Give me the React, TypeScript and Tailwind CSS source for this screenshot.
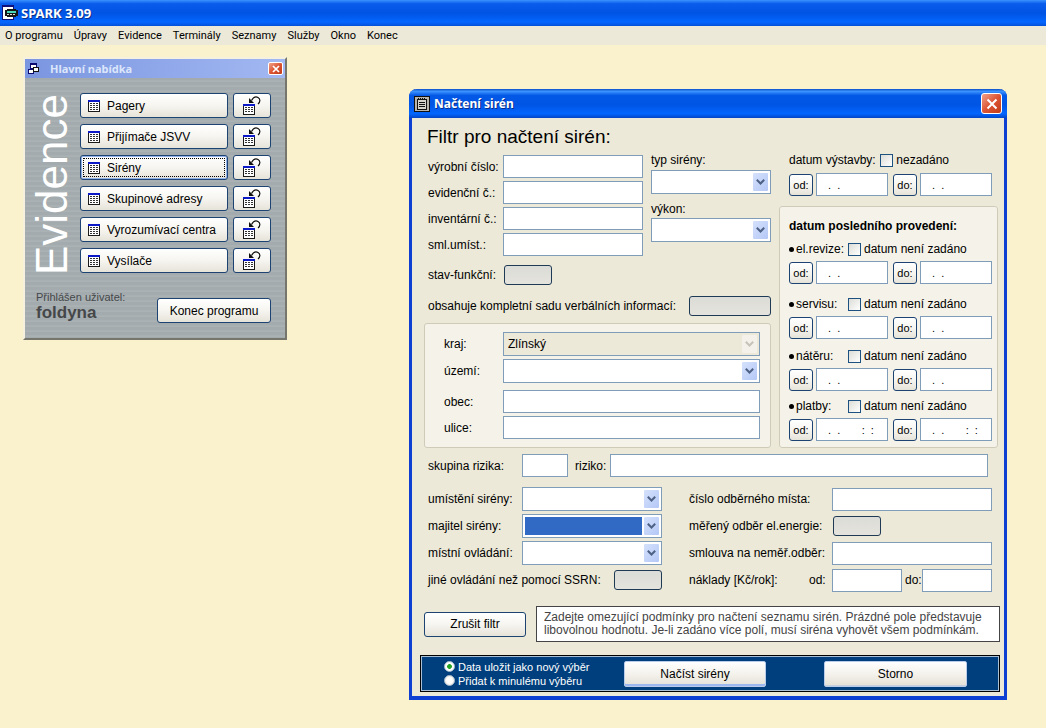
import React from 'react';
import clsx from 'clsx';

const menuItems = ['O programu', 'Úpravy', 'Evidence', 'Terminály', 'Seznamy', 'Služby', 'Okno', 'Konec'];

const mainButtons = ['Pagery', 'Přijímače JSVV', 'Sirény', 'Skupinové adresy', 'Vyrozumívací centra', 'Vysílače'];

const dateGroups = [
    { id: 'revize', label: 'el.revize:', value: ' .  .', spacing: 'mt-[7px]' },
    { id: 'servis', label: 'servisu:', value: ' .  .', spacing: 'mt-3' },
    { id: 'nater', label: 'nátěru:', value: ' .  .', spacing: 'mt-[9px]' },
    { id: 'platby', label: 'platby:', value: ' .  .       :  :', spacing: 'mt-[7px]' },
];

const buttonBase = 'rounded-[3px] border border-[#1c4372] bg-gradient-to-b from-white via-[#f6f5f0] to-[#e6e3d9]';

const TableIcon = () => (
    <svg width="12" height="12" viewBox="0 0 12 12" shapeRendering="crispEdges" className="shrink-0">
        <rect width="12" height="12" fill="#1a1a1a" />
        <rect width="12" height="2" fill="#0a18c8" />
        <rect x="1" y="2" width="10" height="9" fill="#fff" />
        <path d="M2 3.5h2M5 3.5h2M8 3.5h2M2 5.5h2M5 5.5h2M8 5.5h2M2 7.5h2M5 7.5h2M8 7.5h2M2 9.5h2M5 9.5h2M8 9.5h2" stroke="#333" />
    </svg>
);

const ReturnIcon = () => (
    <svg width="18" height="19" viewBox="0 0 18 19">
        <g shapeRendering="crispEdges">
            <rect y="8" width="12" height="11" fill="#1a1a1a" />
            <rect y="8" width="12" height="2" fill="#0a18c8" />
            <rect x="1" y="10" width="10" height="8" fill="#fff" />
            <path d="M2 11.5h2M5 11.5h2M8 11.5h2M2 13.5h2M5 13.5h2M8 13.5h2M2 15.5h2M5 15.5h2M8 15.5h2" stroke="#333" />
        </g>
        <path d="M8.500 4.500C10.500 1 13 .5 15 1.500C17.500 3 17.500 6 15 8" fill="none" stroke="#111" strokeWidth="1.200" />
        <path d="M6 2v5h5z" fill="#111" />
    </svg>
);

const AppIcon = () => (
    <svg width="16" height="16" viewBox="0 0 16 16" shapeRendering="crispEdges">
        <rect width="12" height="15" fill="#10107a" />
        <rect x="1" y="2" width="10" height="12" fill="#fff" />
        <path d="M5 4h9v1h2v6h-2v1H5v-1H3V5h2z" fill="#151515" />
        <rect x="5" y="6" width="9" height="2" fill="#46d8b8" />
        <path d="M5 9.500h2M8 9.500h2M11 9.500h2" stroke="#ddd" />
    </svg>
);

const WindowsIcon = () => (
    <svg width="12" height="12" viewBox="0 0 12 12" shapeRendering="crispEdges">
        <rect x="2.500" y="1.500" width="6" height="4" fill="#fff" stroke="#0a0a70" />
        <path d="M2 1h7" stroke="#0a0a70" strokeWidth="2" />
        <rect x=".5" y="6.500" width="5" height="4" fill="#fff" stroke="#0a0a70" />
        <rect x="5.500" y="4.500" width="5" height="4" fill="#fff" stroke="#111" />
    </svg>
);

const NotepadIcon = () => (
    <svg width="16" height="16" viewBox="0 0 16 16" shapeRendering="crispEdges">
        <rect width="16" height="16" fill="#111" />
        <rect x="1" y="1" width="14" height="14" fill="#b9b5ac" />
        <rect x="3.500" y="3.500" width="9" height="10" fill="#d6d3ca" stroke="#111" />
        <path d="M4.500 2v2M6.500 2v2M8.500 2v2M10.500 2v2M5 6.500h6M5 8.500h6M5 10.500h6" stroke="#111" />
    </svg>
);

const CloseButton = ({ small }: { small?: boolean }) => (
    <button
        type="button"
        aria-label="Zavřít"
        className={clsx(
            'flex items-center justify-center border border-white bg-gradient-to-br from-[#f0a088] via-[#dc5433] to-[#c23c18]',
            small ? 'h-[13px] w-[15px] rounded-[2px]' : 'h-[21px] w-[21px] rounded-[3px]'
        )}
    >
        <svg viewBox="0 0 12 12" className={small ? 'h-2 w-2' : 'h-3 w-3'}>
            <path d="M1.500 1.500l9 9M10.500 1.500l-9 9" stroke="#fff" strokeWidth={small ? 2.6 : 2} />
        </svg>
    </button>
);

const TextField = ({ id, className, value }: { id: string; className?: string; value?: string }) => (
    <input
        id={id}
        type="text"
        defaultValue={value}
        className={clsx('h-[23px] min-w-0 border border-[#7f9db9] bg-white px-2', className)}
    />
);

type SelectProps = {
    id: string;
    className?: string;
    value?: string;
    disabled?: boolean;
    focused?: boolean;
};

const SelectField = ({ id, className, value = '', disabled, focused }: SelectProps) => (
    <div className={clsx('relative h-6 border border-[#7f9db9] p-0.5', disabled ? 'bg-[#ece9d8]' : 'bg-white', className)}>
        <select
            id={id}
            disabled={disabled}
            defaultValue={value}
            className={clsx('block h-full appearance-none pl-0.5 text-black opacity-100 outline-none', focused ? 'w-[calc(100%-17px)] bg-[#316ac5]' : 'w-full')}
        >
            <option value={value}>{value}</option>
        </select>
        <span
            className={clsx(
                'pointer-events-none absolute top-0.5 right-0.5 bottom-0.5 flex w-[15px] items-center justify-center rounded-[1px]',
                disabled ? 'bg-[#f3f1ea]' : 'bg-gradient-to-br from-[#d5e1fc] to-[#b4c8f6]'
            )}
        >
            <svg width="9" height="6" viewBox="0 0 9 6">
                <path d="M.8 .8L4.500 4.500L8.200 .8" fill="none" stroke={disabled ? '#c6c3b8' : '#4d6185'} strokeWidth="2" />
            </svg>
        </span>
    </div>
);

const StateButton = ({ id, className }: { id: string; className?: string }) => (
    <button
        id={id}
        type="button"
        className={clsx('h-5 rounded-[3px] border border-[#1f3a55] bg-gradient-to-b from-[#dcdcd8] to-[#e4e3dc]', className)}
    />
);

const CheckBox = ({ id }: { id: string }) => (
    <input id={id} type="checkbox" className="h-[13px] w-[13px] appearance-none border border-[#1c5180] bg-gradient-to-br from-[#dcdcd7] to-white" />
);

const DateRange = ({ id, value }: { id: string; value: string }) => (
    <div className="flex items-center text-[11px]">
        <button type="button" className={clsx(buttonBase, 'h-[22px] w-6')}>od:</button>
        <input aria-label="od" id={`${id}-od`} type="text" defaultValue={value} className="ml-[3px] h-[23px] w-[72px] border border-[#7f9db9] bg-white pl-2" />
        <button type="button" className={clsx(buttonBase, 'ml-[5px] h-[22px] w-6')}>do:</button>
        <input aria-label="do" id={`${id}-do`} type="text" defaultValue={value} className="ml-[3px] h-[23px] w-[72px] border border-[#7f9db9] bg-white pl-2" />
    </div>
);

const MainMenu = () => (
    <section className="mt-3 w-[264px] shrink-0 border-2 border-t-[#f5f1de] border-l-[#f5f1de] border-r-[#77766c] border-b-[#77766c] bg-[#a5adb0]">
        <header className="flex h-[19px] items-center bg-gradient-to-r from-[#7b96e0] to-[#a2b8f2] pr-0.5 pl-[3px]">
            <WindowsIcon />
            <h2 className="ml-2.5 flex-1 font-['Noto_Sans',sans-serif] text-[11px] font-bold text-[#dce6fb]">Hlavní nabídka</h2>
            <CloseButton small />
        </header>
        <div className="bg-[repeating-linear-gradient(180deg,#a3abae_0px,#a3abae_2px,#adb5b7_3px,#9fa7aa_5px)] pt-[15px] pr-[14px] pb-[15px] pl-[9px]">
            <div className="flex">
                <div className="w-[46px] shrink-0">
                    <span className="block h-[182px] w-9 rotate-180 text-[44px] leading-[36px] text-white [writing-mode:vertical-rl]">Evidence</span>
                </div>
                <ul className="flex flex-1 flex-col gap-1.5">
                    {mainButtons.map((label) => (
                        <li key={label} className="flex gap-[5px]">
                            <button
                                type="button"
                                className={clsx(buttonBase, 'relative flex h-[25px] flex-1 items-center gap-[7px] pl-[7px]', label === 'Sirény' && 'ring-1 ring-[#8fb0ea] ring-inset')}
                            >
                                <TableIcon />
                                {label}
                                {label === 'Sirény' && <span className="absolute inset-0.5 border border-dotted border-black" />}
                            </button>
                            <button type="button" aria-label={`${label} - poslední výběr`} className={clsx(buttonBase, 'flex h-[25px] w-[38px] items-center justify-center')}>
                                <ReturnIcon />
                            </button>
                        </li>
                    ))}
                </ul>
            </div>
            <div className="mt-4 flex items-end justify-between pl-0.5">
                <div className="text-[#454749]">
                    <p className="text-[11px] leading-3">Přihlášen uživatel:</p>
                    <p className="text-[17px] leading-5 font-bold">foldyna</p>
                </div>
                <button type="button" className={clsx(buttonBase, 'h-[25px] w-[114px]')}>Konec programu</button>
            </div>
        </div>
    </section>
);

const BasicFilter = () => (
    <div className="flex-1">
        <h3 className="ml-[3px] h-[26px] text-[19px] leading-[22px]">Filtr pro načtení sirén:</h3>
        <div className="flex gap-2">
            <div className="ml-1 grid flex-1 grid-cols-[75px_1fr] items-center gap-y-[3px] pt-[3px]">
                <label htmlFor="vyrobni">výrobní číslo:</label>
                <TextField id="vyrobni" />
                <label htmlFor="evidencni">evidenční č.:</label>
                <TextField id="evidencni" />
                <label htmlFor="inventarni">inventární č.:</label>
                <TextField id="inventarni" />
                <label htmlFor="sml">sml.umíst.:</label>
                <TextField id="sml" />
            </div>
            <div className="flex w-[120px] flex-col">
                <label htmlFor="typ" className="mb-0.5">typ sirény:</label>
                <SelectField id="typ" />
                <label htmlFor="vykon" className="mt-[7px] mb-px">výkon:</label>
                <SelectField id="vykon" />
            </div>
        </div>
        <div className="mt-[9px] ml-1 flex items-center">
            <label htmlFor="stav" className="w-[76px]">stav-funkční:</label>
            <StateButton id="stav" className="w-12" />
        </div>
        <div className="mt-[11px] ml-1 flex items-center justify-between">
            <label htmlFor="verbalni">obsahuje kompletní sadu verbálních informací:</label>
            <StateButton id="verbalni" className="w-[82px]" />
        </div>
        <div className="mt-[7px] grid grid-cols-[59px_1fr] items-center gap-y-[3px] rounded-[3px] border border-[#cfcbb8] bg-[#f5f3e9] py-2 pr-[10px] pl-[19px]">
            <label htmlFor="kraj">kraj:</label>
            <SelectField id="kraj" value="Zlínský" disabled />
            <label htmlFor="uzemi">území:</label>
            <SelectField id="uzemi" />
            <label htmlFor="obec" className="mt-1">obec:</label>
            <TextField id="obec" className="mt-1" />
            <label htmlFor="ulice">ulice:</label>
            <TextField id="ulice" />
        </div>
    </div>
);

const DateFilter = () => (
    <div className="w-[219px] pt-[26px]">
        <div className="mb-[5px] flex items-center pl-2.5">
            <span>datum výstavby:</span>
            <span className="ml-auto flex items-center gap-[3px] pr-[49px]">
                <CheckBox id="nezadano" />
                <label htmlFor="nezadano">nezadáno</label>
            </span>
        </div>
        <div className="pl-2.5">
            <DateRange id="vystavba" value=" .  ." />
        </div>
        <fieldset className="mt-[10px] rounded-[3px] border border-[#cfcbb8] bg-[#f5f3e9] pt-[11px] pb-1.5 pl-[9px]">
            <h4 className="font-bold">datum posledního provedení:</h4>
            {dateGroups.map((group) => (
                <div key={group.id} className={group.spacing}>
                    <div className="mb-1 flex items-center">
                        <span className="h-[5px] w-[5px] rounded-full bg-black" />
                        <span className="ml-0.5 w-[52px]">{group.label}</span>
                        <CheckBox id={group.id} />
                        <label htmlFor={group.id} className="ml-[3px]">datum není zadáno</label>
                    </div>
                    <DateRange id={group.id} value={group.value} />
                </div>
            ))}
        </fieldset>
    </div>
);

const PlacementFilter = () => (
    <div className="mt-2.5 flex justify-between pr-3 pl-4">
        <div className="flex w-[234px] flex-col gap-[3px]">
            <div className="flex items-center">
                <label htmlFor="umisteni" className="w-[94px]">umístění sirény:</label>
                <SelectField id="umisteni" className="flex-1" />
            </div>
            <div className="flex items-center">
                <label htmlFor="majitel" className="w-[94px]">majitel sirény:</label>
                <SelectField id="majitel" className="flex-1" focused />
            </div>
            <div className="flex items-center">
                <label htmlFor="mistni" className="w-[94px]">místní ovládání:</label>
                <SelectField id="mistni" className="flex-1" />
            </div>
            <div className="flex h-6 items-center justify-between">
                <label htmlFor="jine">jiné ovládání než pomocí SSRN:</label>
                <StateButton id="jine" className="w-12" />
            </div>
        </div>
        <div className="flex w-[303px] flex-col gap-[3px]">
            <div className="flex h-6 items-center">
                <label htmlFor="odberne" className="w-[143px]">číslo odběrného místa:</label>
                <TextField id="odberne" className="flex-1" />
            </div>
            <div className="flex h-6 items-center">
                <label htmlFor="mereny" className="w-[144px]">měřený odběr el.energie:</label>
                <StateButton id="mereny" className="w-12" />
            </div>
            <div className="flex h-6 items-center">
                <label htmlFor="smlouva" className="w-[143px]">smlouva na neměř.odběr:</label>
                <TextField id="smlouva" className="flex-1" />
            </div>
            <div className="flex h-6 items-center">
                <span className="w-[120px]">náklady [Kč/rok]:</span>
                <label htmlFor="naklady-od" className="w-[23px]">od:</label>
                <TextField id="naklady-od" className="flex-1" />
                <label htmlFor="naklady-do" className="w-5 pl-[3px]">do:</label>
                <TextField id="naklady-do" className="flex-1" />
            </div>
        </div>
    </div>
);

const radioClass = 'h-[11px] w-[11px] appearance-none rounded-full border border-[#9db4c8] bg-white bg-[radial-gradient(circle,#fff_40%,#dcdcd7)] checked:bg-[radial-gradient(circle,#22a322_32%,#fff_42%)]';
const submitClass = 'h-[26px] rounded-[2px] border border-[#b9cdea] bg-gradient-to-b from-white via-[#f4f2ec] to-[#e4e1d6]';

const SirenDialog = () => (
    <section className="mt-[44px] w-[598px] shrink-0 rounded-t-lg border-x-[3px] border-b-4 border-[#0c3fd2] bg-[#ece9d8]">
        <header className="-mx-[3px] flex h-[29px] items-center rounded-t-lg bg-[linear-gradient(180deg,#0a4cc8_0%,#3d95ff_8%,#0458e6_22%,#0055e5_55%,#0366ff_85%,#0345c8_100%)] pr-[5px] pl-[5px]">
            <NotepadIcon />
            <h2 className="ml-1 flex-1 font-['Noto_Sans',sans-serif] text-[12px] font-bold text-white [text-shadow:1px_1px_#0a2f8a]">Načtení sirén</h2>
            <CloseButton />
        </header>
        <div className="pt-2 pb-1">
            <div className="flex gap-2 pr-1.5 pl-3">
                <BasicFilter />
                <DateFilter />
            </div>
            <div className="mt-1.5 flex items-center pr-4 pl-4">
                <label htmlFor="skupina" className="w-[94px]">skupina rizika:</label>
                <TextField id="skupina" className="w-[46px]" />
                <label htmlFor="riziko" className="w-[42px] pl-[7px]">riziko:</label>
                <TextField id="riziko" className="flex-1" />
            </div>
            <PlacementFilter />
            <div className="mt-3.5 flex items-center gap-2.5 pr-1 pl-3">
                <button type="button" className={clsx(buttonBase, 'h-[25px] w-[102px] shrink-0')}>Zrušit filtr</button>
                <p className="flex-1 border border-[#444] bg-white px-[7px] pt-1 pb-1 leading-[13px] whitespace-nowrap text-[#444]">
                    Zadejte omezující podmínky pro načtení seznamu sirén. Prázdné pole představuje
                    <br />
                    libovolnou hodnotu. Je-li zadáno více polí, musí siréna vyhovět všem podmínkám.
                </p>
            </div>
            <div className="mt-[13px] mr-1 ml-2 flex h-[37px] items-center border border-black bg-[#003f7d] pr-8 pl-[23px] shadow-[inset_0_0_0_1px_#a9c0d4]">
                <div className="flex w-[180px] flex-col text-[11px] leading-[14px] text-white">
                    <label className="flex items-center gap-[3px]">
                        <input type="radio" name="vyber" defaultChecked className={radioClass} />
                        Data uložit jako nový výběr
                    </label>
                    <label className="flex items-center gap-[3px]">
                        <input type="radio" name="vyber" className={radioClass} />
                        Přidat k minulému výběru
                    </label>
                </div>
                <button type="button" className={clsx(submitClass, 'w-[142px] shadow-[inset_0_-2px_0_#9db8ee]')}>Načíst sirény</button>
                <button type="button" className={clsx(submitClass, 'ml-auto w-[143px] shadow-[inset_0_-1px_0_#c4d0de]')}>Storno</button>
            </div>
        </div>
    </section>
);

const App = () => {
    return (
        <div className="flex min-h-screen flex-col bg-[#f9f2cd] font-['Liberation_Sans',Arial,sans-serif] text-[12px] leading-4 text-black">
            <header className="flex h-[26px] items-center gap-[3px] bg-[linear-gradient(180deg,#3a93ff_0%,#0a5cec_14%,#0054e3_50%,#0366ff_85%,#0450d8_100%)] pl-0.5">
                <AppIcon />
                <h1 className="font-['Noto_Sans',sans-serif] text-[13px] font-bold text-white [text-shadow:1px_1px_#0a2f8a]">SPARK 3.09</h1>
            </header>
            <nav className="flex h-[19px] items-center gap-[11px] bg-[#ece9d8] pl-[5px] font-[Roboto,sans-serif] text-[11px]">
                {menuItems.map((item) => (
                    <button key={item} type="button">{item}</button>
                ))}
            </nav>
            <main className="flex flex-1 items-start justify-between gap-6 pr-[39px] pb-7 pl-[23px]">
                <MainMenu />
                <SirenDialog />
            </main>
        </div>
    );
};

export default App;
